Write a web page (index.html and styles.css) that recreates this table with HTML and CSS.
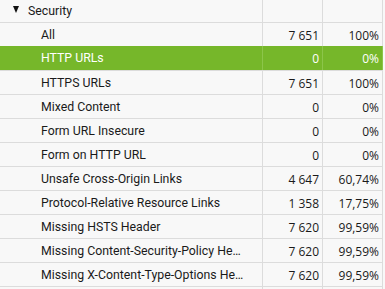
FILE: index.html
```html
<!DOCTYPE html>
<html>
<head>
<meta charset="utf-8">
<link rel="stylesheet" href="styles.css">
</head>
<body>
<div class="table">
  <div class="row head">
    <div class="cell name"><span class="tri"></span>Security</div>
    <div class="cell num"></div>
    <div class="cell num"></div>
  </div>
  <div class="row"><div class="cell name sub">All</div><div class="cell num">7 651</div><div class="cell num">100%</div></div>
  <div class="row sel"><div class="cell name sub">HTTP URLs</div><div class="cell num">0</div><div class="cell num">0%</div></div>
  <div class="row"><div class="cell name sub">HTTPS URLs</div><div class="cell num">7 651</div><div class="cell num">100%</div></div>
  <div class="row"><div class="cell name sub">Mixed Content</div><div class="cell num">0</div><div class="cell num">0%</div></div>
  <div class="row"><div class="cell name sub">Form URL Insecure</div><div class="cell num">0</div><div class="cell num">0%</div></div>
  <div class="row"><div class="cell name sub">Form on HTTP URL</div><div class="cell num">0</div><div class="cell num">0%</div></div>
  <div class="row"><div class="cell name sub">Unsafe Cross-Origin Links</div><div class="cell num">4 647</div><div class="cell num">60,74%</div></div>
  <div class="row"><div class="cell name sub">Protocol-Relative Resource Links</div><div class="cell num">1 358</div><div class="cell num">17,75%</div></div>
  <div class="row"><div class="cell name sub">Missing HSTS Header</div><div class="cell num">7 620</div><div class="cell num">99,59%</div></div>
  <div class="row"><div class="cell name sub">Missing Content-Security-Policy Header</div><div class="cell num">7 620</div><div class="cell num">99,59%</div></div>
  <div class="row"><div class="cell name sub">Missing X-Content-Type-Options Header</div><div class="cell num">7 620</div><div class="cell num">99,59%</div></div>
  <div class="row tail"><div class="cell name sub"></div><div class="cell num"></div><div class="cell num"></div></div>
</div>
</body>
</html>
```
FILE: styles.css
```css
html, body {
  margin: 0;
  padding: 0;
  background: #f8f8f8;
  height: 289px;
  overflow: hidden;
}
.table {
  width: 383px;
  font-family: Roboto, "Liberation Sans", sans-serif;
  font-size: 12px;
  color: #1a1a1a;
}
.row {
  display: grid;
  grid-template-columns: 263px 60px 60px;
  height: 23px;
  border-bottom: 1px solid #dcdcdc;
}
.row.head {
  height: 22px;
}
.row.tail {
  height: 2px;
  border-bottom: none;
}
.cell {
  display: flex;
  align-items: center;
  border-right: 1px solid #dcdcdc;
  white-space: nowrap;
  overflow: hidden;
  min-width: 0;
}
.name {
  padding-left: 29px;
  padding-right: 18px;
  display: block;
  line-height: 24px;
  text-overflow: ellipsis;
  font-size: 12.3px;
}
.head .name {
  line-height: 22px;
}
.name.sub {
  padding-left: 41px;
}
.tri {
  display: inline-block;
  width: 0;
  height: 0;
  border-left: 3.5px solid transparent;
  border-right: 3.5px solid transparent;
  border-top: 7px solid #111;
  position: relative;
  top: -2px;
  margin-left: -16px;
  margin-right: 9px;
}
.num {
  justify-content: flex-end;
  padding-right: 3px;
  padding-top: 1px;
  font-family: "Open Sans", "DejaVu Sans", sans-serif;
  font-size: 12px;
}
.row.sel {
  background: #76b72a;
  color: #fff;
  margin-top: -1px;
  height: 24px;
}
.row.sel .cell {
  border-right-color: #8cc54a;
}
.row.sel .name {
  line-height: 25px;
}
```
